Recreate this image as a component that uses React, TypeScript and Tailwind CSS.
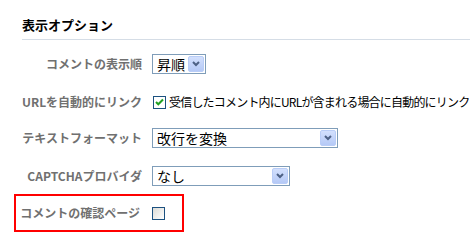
import React from 'react'

const font = "font-['Noto_Sans_CJK_JP','Noto_Sans',sans-serif]"

function Arrow() {
    return (
        <span className="ml-auto mr-[1px] flex h-[16px] w-[16px] items-center justify-center rounded-[2px] border border-[#b9cdf7] bg-gradient-to-b from-[#d3e0fd] to-[#b5c9f6]">
            <svg width="8" height="6" viewBox="0 0 8 6">
                <path d="M1 1 L4 4 L7 1" fill="none" stroke="#4d6185" strokeWidth="2" />
            </svg>
        </span>
    )
}

function Select({ value, width }: { value: string; width: string }) {
    return (
        <div className={`flex h-[20px] items-center border border-[#7f9db9] bg-white pl-[4px] ${width}`}>
            <span className="text-[14px] leading-none text-black">{value}</span>
            <Arrow />
        </div>
    )
}

function Label({ children, width = 'w-[120px]' }: { children: React.ReactNode; width?: string }) {
    return (
        <div className={`${width} shrink-0 text-right text-[12px] font-bold leading-none text-[#707070]`}>{children}</div>
    )
}

export default function App() {
    return (
        <div className={`${font} h-[244px] w-[470px] overflow-hidden bg-white pl-[22px] pt-[15px]`}>
            <div className="border-b border-[#d5dde6] pb-[5px] text-[13px] font-bold leading-[19px] text-black">
                表示オプション
            </div>

            <div className="mt-[12px] flex h-[24px] items-center">
                <Label>コメントの表示順</Label>
                <div className="ml-[10px]">
                    <Select value="昇順" width="w-[54px]" />
                </div>
            </div>

            <div className="mt-[14px] flex h-[24px] items-center whitespace-nowrap">
                <Label>URLを自動的にリンク</Label>
                <span className="ml-[11px] flex h-[13px] w-[13px] shrink-0 items-center justify-center border border-[#1c5180] bg-white">
                    <svg width="9" height="8" viewBox="0 0 9 8">
                        <path d="M1 4 L3.3 6.3 L8 1.5" fill="none" stroke="#21a121" strokeWidth="2" />
                    </svg>
                </span>
                <span className="ml-[3px] text-[12px] leading-none tracking-[-0.8px] text-black">
                    受信したコメント内にURLが含まれる場合に自動的にリンクする
                </span>
            </div>

            <div className="mt-[12px] flex h-[24px] items-center">
                <Label>テキストフォーマット</Label>
                <div className="ml-[10px]">
                    <Select value="改行を変換" width="w-[186px]" />
                </div>
            </div>

            <div className="mt-[14px] flex h-[24px] items-center">
                <Label>CAPTCHAプロバイダ</Label>
                <div className="ml-[10px]">
                    <Select value="なし" width="w-[138px]" />
                </div>
            </div>

            <div className="-ml-[8px] mt-[6px] flex h-[38px] w-[170px] items-center border-2 border-[#ff0000]">
                <Label width="w-[124px]">コメントの確認ページ</Label>
                <span className="ml-[12px] h-[13px] w-[13px] border border-[#1c5180] bg-gradient-to-br from-[#dcdcd7] to-white" />
            </div>
        </div>
    )
}
